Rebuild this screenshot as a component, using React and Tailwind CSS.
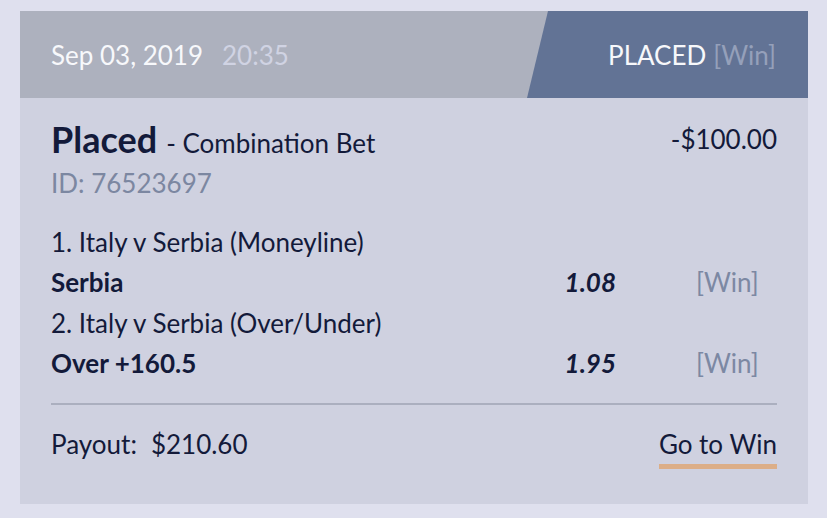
export default function App() {
  return (
    <div className="w-[827px] h-[518px] bg-[#dfe0ee] pt-[11px] pl-[20px] font-['Lato',sans-serif] text-[#131a3a] overflow-hidden">
      <div className="w-[788px] bg-[#cfd1e0]">
        <div className="flex h-[87px] bg-[#adb1be]">
          <div className="flex-1 flex items-center pl-[31px] pt-[1px] text-[26px] leading-[40px]">
            <span className="text-[#f7f8fb]">Sep 03, 2019</span>
            <span className="ml-[19px] text-[#d0d3e3]">20:35</span>
          </div>
          <div className="w-[281px] bg-[#627395] [clip-path:polygon(21px_0,100%_0,100%_100%,0_100%)] flex items-center justify-end pr-[32px] pt-[1px] text-[26px] leading-[40px]">
            <span className="text-[#f7f8fb]">PLACED</span>
            <span className="ml-[7px] text-[#95a0ba]">[Win]</span>
          </div>
        </div>
        <div className="pl-[31px] pr-[31px] pt-[21px] pb-[35px]">
          <div className="flex items-start justify-between">
            <div className="h-[40px] leading-[40px] whitespace-nowrap">
              <span className="text-[36px] font-bold">Placed</span>
              <span className="text-[26px] ml-[9px]">- Combination Bet</span>
            </div>
            <div className="text-[26px] leading-[40px]">-$100.00</div>
          </div>
          <div className="mt-[4px] text-[26px] leading-[40px] text-[#7c87a1]">ID: 76523697</div>
          <div className="mt-[19px] text-[26px] leading-[40.3px]">
            <div>1. Italy v Serbia (Moneyline)</div>
            <div className="flex">
              <span className="flex-1 font-bold">Serbia</span>
              <span className="font-bold italic">1.08</span>
              <span className="w-[161px] pl-[80px] text-[#7c88a3]">[Win]</span>
            </div>
            <div>2. Italy v Serbia (Over/Under)</div>
            <div className="flex">
              <span className="flex-1 font-bold">Over +160.5</span>
              <span className="font-bold italic">1.95</span>
              <span className="w-[161px] pl-[80px] text-[#7c88a3]">[Win]</span>
            </div>
          </div>
          <div className="mt-[20px] h-[2px] bg-[#abafbf]" />
          <div className="mt-[19px] flex items-start justify-between text-[26px] leading-[40px]">
            <div>
              <span>Payout:</span>
              <span className="ml-[14px]">$210.60</span>
            </div>
            <span className="inline-block border-b-[5px] border-[#dcae88]">Go to Win</span>
          </div>
        </div>
      </div>
    </div>
  );
}
